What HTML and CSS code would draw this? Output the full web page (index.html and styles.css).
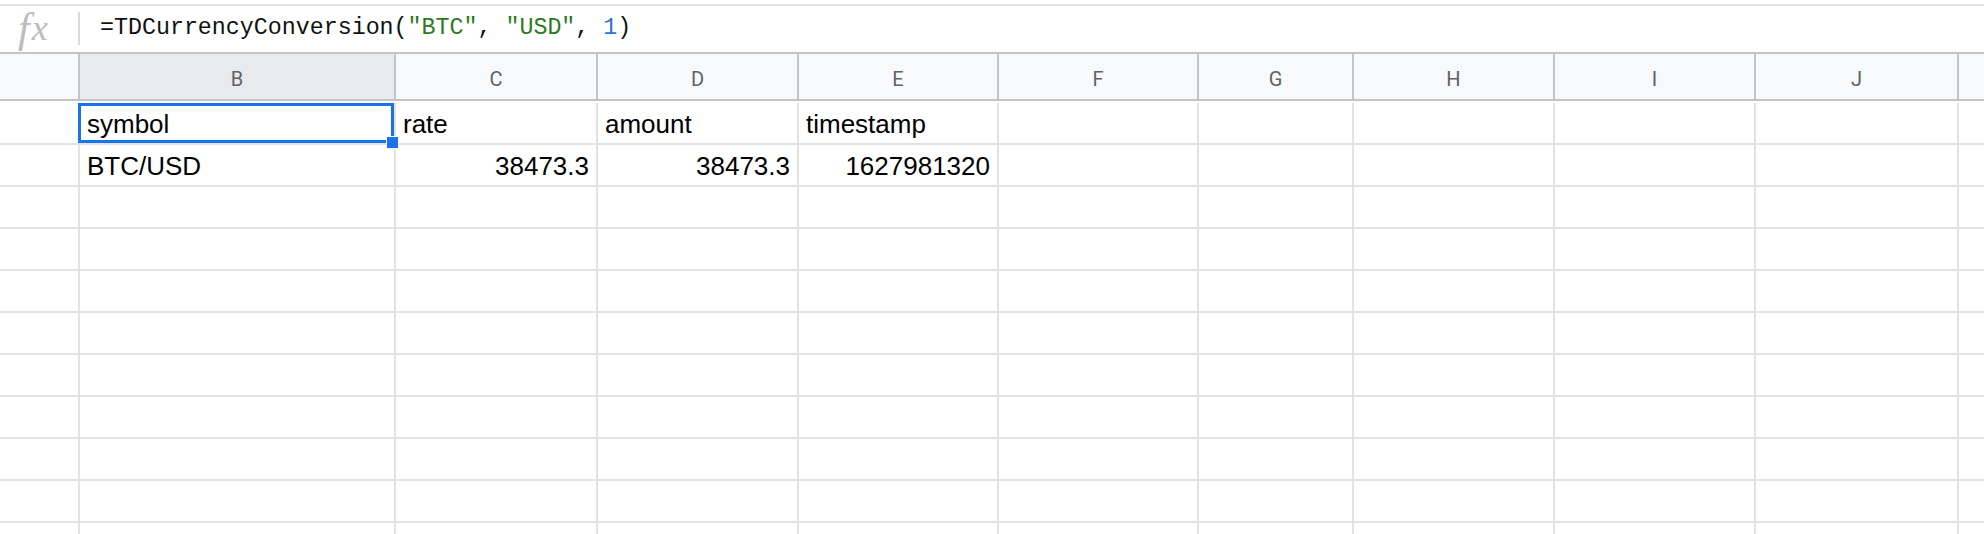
FILE: index.html
```html
<!DOCTYPE html>
<html>
<head>
<meta charset="utf-8">
<link rel="stylesheet" href="styles.css">
</head>
<body>
<div class="formula-bar">
  <div class="fx-box"><span class="fx-f">f</span><span class="fx-x">x</span></div>
  <div class="fx-sep"></div>
  <div class="formula"><span>=TDCurrencyConversion(</span><span class="str">"BTC"</span><span>, </span><span class="str">"USD"</span><span>, </span><span class="num">1</span><span>)</span></div>
</div>
<div class="grid">
  <div class="hdr corner"></div>
  <div class="hdr sel">B</div>
  <div class="hdr">C</div>
  <div class="hdr">D</div>
  <div class="hdr">E</div>
  <div class="hdr">F</div>
  <div class="hdr">G</div>
  <div class="hdr">H</div>
  <div class="hdr">I</div>
  <div class="hdr">J</div>
  <div class="hdr last"></div>

  <div class="c rh"></div>
  <div class="c active">symbol<div class="sel-box"></div><div class="handle"></div></div>
  <div class="c">rate</div>
  <div class="c">amount</div>
  <div class="c">timestamp</div>
  <div class="c"></div><div class="c"></div><div class="c"></div><div class="c"></div><div class="c"></div><div class="c last"></div>

  <div class="c rh"></div>
  <div class="c">BTC/USD</div>
  <div class="c r">38473.3</div>
  <div class="c r">38473.3</div>
  <div class="c r">1627981320</div>
  <div class="c"></div><div class="c"></div><div class="c"></div><div class="c"></div><div class="c"></div><div class="c last"></div>

  <div class="c rh"></div><div class="c"></div><div class="c"></div><div class="c"></div><div class="c"></div><div class="c"></div><div class="c"></div><div class="c"></div><div class="c"></div><div class="c"></div><div class="c last"></div>
  <div class="c rh"></div><div class="c"></div><div class="c"></div><div class="c"></div><div class="c"></div><div class="c"></div><div class="c"></div><div class="c"></div><div class="c"></div><div class="c"></div><div class="c last"></div>
  <div class="c rh"></div><div class="c"></div><div class="c"></div><div class="c"></div><div class="c"></div><div class="c"></div><div class="c"></div><div class="c"></div><div class="c"></div><div class="c"></div><div class="c last"></div>
  <div class="c rh"></div><div class="c"></div><div class="c"></div><div class="c"></div><div class="c"></div><div class="c"></div><div class="c"></div><div class="c"></div><div class="c"></div><div class="c"></div><div class="c last"></div>
  <div class="c rh"></div><div class="c"></div><div class="c"></div><div class="c"></div><div class="c"></div><div class="c"></div><div class="c"></div><div class="c"></div><div class="c"></div><div class="c"></div><div class="c last"></div>
  <div class="c rh"></div><div class="c"></div><div class="c"></div><div class="c"></div><div class="c"></div><div class="c"></div><div class="c"></div><div class="c"></div><div class="c"></div><div class="c"></div><div class="c last"></div>
  <div class="c rh"></div><div class="c"></div><div class="c"></div><div class="c"></div><div class="c"></div><div class="c"></div><div class="c"></div><div class="c"></div><div class="c"></div><div class="c"></div><div class="c last"></div>
  <div class="c rh"></div><div class="c"></div><div class="c"></div><div class="c"></div><div class="c"></div><div class="c"></div><div class="c"></div><div class="c"></div><div class="c"></div><div class="c"></div><div class="c last"></div>
  <div class="c rh"></div><div class="c"></div><div class="c"></div><div class="c"></div><div class="c"></div><div class="c"></div><div class="c"></div><div class="c"></div><div class="c"></div><div class="c"></div><div class="c last"></div>
</div>
</body>
</html>
```
FILE: styles.css
```css
* { box-sizing: border-box; }
html, body {
  margin: 0;
  padding: 0;
  background: #fff;
  width: 1984px;
  height: 534px;
  overflow: hidden;
}
body {
  font-family: "Liberation Sans", Arial, sans-serif;
}
.formula-bar {
  margin-top: 4px;
  border-top: 2px solid #e1e1e1;
  height: 48px;
  display: flex;
  align-items: center;
}
.fx-box {
  width: 78px;
  height: 46px;
  display: flex;
  align-items: center;
  padding-left: 18px;
  padding-bottom: 2px;
  font-family: "Liberation Serif", "Times New Roman", serif;
  font-style: italic;
  color: #bcbcbc;
}
.fx-f {
  font-size: 42px;
  margin-right: 2px;
}
.fx-x {
  font-size: 36px;
}
.fx-sep {
  width: 2px;
  height: 33px;
  background: #dadada;
  margin-top: -1px;
}
.formula {
  margin-left: 20px;
  font-family: "Liberation Mono", "DejaVu Sans Mono", monospace;
  font-size: 23.3px;
  color: #111;
  white-space: pre;
  padding-bottom: 2px;
}
.formula .str { color: #2b7a23; }
.formula .num { color: #2f6fd6; }

.grid {
  display: grid;
  grid-template-columns: 80px 316px 202px 201px 200px 200px 155px 201px 201px 203px 1fr;
  grid-auto-rows: 42px;
  grid-template-rows: 49px;
  border-top: 2px solid #c4c4c4;
}
.hdr {
  background: #f8f9fa;
  border-right: 2px solid #c4c4c4;
  border-bottom: 2px solid #c4c4c4;
  display: flex;
  align-items: center;
  justify-content: center;
  padding-top: 4px;
  font-family: Roboto, "Liberation Sans", sans-serif;
  font-size: 20px;
  color: #5f6368;
  height: 47px;
}
.hdr.sel { background: #e8eaed; }
.hdr.last { border-right: none; }
.c {
  position: relative;
  border-right: 2px solid #e2e2e2;
  border-bottom: 2px solid #e2e2e2;
  display: flex;
  align-items: flex-end;
  padding: 0 7px 4px 7px;
  font-size: 26px;
  line-height: 30px;
  color: #000;
  white-space: nowrap;
}
.c.r { justify-content: flex-end; }
.c.last { border-right: none; }
.sel-box {
  position: absolute;
  left: -2px;
  top: 0;
  right: 0;
  bottom: 0;
  border: 3px solid #1a73e8;
}
.handle {
  position: absolute;
  right: -5px;
  bottom: -6px;
  width: 13px;
  height: 13px;
  background: #1a73e8;
  border: 1px solid #fff;
  z-index: 2;
}
```
